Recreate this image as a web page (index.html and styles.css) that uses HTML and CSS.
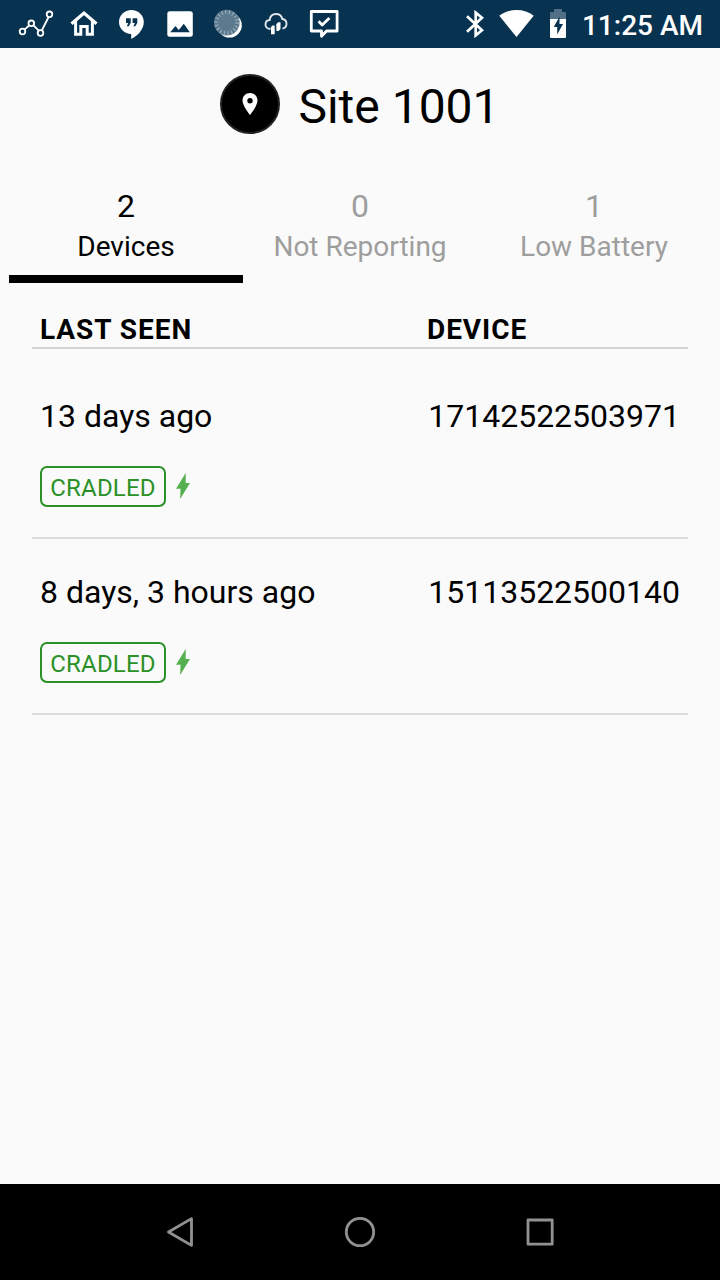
FILE: index.html
```html
<!DOCTYPE html>
<html lang="en">
<head>
    <meta charset="UTF-8">
    <meta name="viewport" content="width=device-width, initial-scale=1.0">
    <title>Site 1001</title>
    <link rel="stylesheet" href="styles.css">
</head>
<body>
    <div class="status-bar">
        <div class="notifications">
            <svg class="status-icon" viewBox="0 0 48 48" fill="none" stroke="#fff" stroke-width="1.8">
                <path d="M12.4 29.6l5-4.4M21 24.8l6 6M30 30l6.6-13"/>
                <circle cx="10.5" cy="31.5" r="2.8"/>
                <circle cx="19.3" cy="23.3" r="2.8"/>
                <circle cx="28.5" cy="33" r="2.8"/>
                <circle cx="37.5" cy="14.3" r="2.8"/>
            </svg>
            <svg class="status-icon" viewBox="0 0 48 48" fill="none" stroke="#fff" stroke-width="3">
                <path d="M11.5 23.8L24 13l12.5 10.8" stroke-width="3.2"/>
                <path d="M15.6 21v13.2h5.2v-7.6h6.4v7.6h5.2V21"/>
            </svg>
            <svg class="status-icon" viewBox="0 0 48 48">
                <path fill="#fff" d="M23.5 10C16.6 10 11 15.3 11 22s5.6 12 12.2 12v5C29 36 35.800 30 35.800 22c0-6.700-5.500-12-12.300-12z"/>
                <path fill="#083350" d="M18 18.300h4.700v4.600l-2 3.300h-1.900l1.500-3.300H18zM24.600 18.300h4.700v4.600l-2 3.300h-1.900l1.500-3.300h-2.300z"/>
            </svg>
            <svg class="status-icon" viewBox="0 0 48 48">
                <rect x="11.300" y="11.300" width="25.500" height="25.500" rx="2.500" fill="#fff"/>
                <path fill="#083350" d="M14.200 32.300l5.300-6.300 3.300 4 5-6.300 6 8.600z"/>
            </svg>
            <svg class="status-icon" viewBox="0 0 48 48">
                <circle cx="25.500" cy="25.300" r="12.300" fill="#fff"/>
                <circle cx="22.800" cy="22.600" r="12.800" fill="#5b7a8e"/>
                <circle cx="22.800" cy="22.600" r="10.500" fill="none" stroke="#a3b4bf" stroke-width="4" stroke-dasharray="1 2.665"/>
            </svg>
            <svg class="status-icon" viewBox="0 0 48 48">
                <path fill="none" stroke="#dfe6ea" stroke-width="1.900" d="M18.500 29c-2.600 0-5-1.600-5-4.500 0-2.700 1.900-4.300 4.200-4.500.4-3.700 3-6 6.300-6 3.200 0 5.700 2 6.300 5 2.700.3 4.200 2.300 4.200 4.800 0 2.400-1.600 4.400-4 4.700"/>
                <path fill="#fff" d="M18.700 27.500l1.700-1.900h2.300v8.700H19v-6.200zM24.300 24.200l1.700-1.900h2.500v6.800l-1.900 1.800h-2.200z"/>
            </svg>
            <svg class="status-icon" viewBox="0 0 48 48" fill="none" stroke="#fff" stroke-linejoin="round">
                <path stroke-width="2.800" d="M11.300 11.500h25.800V31H26.500l-5 5.300V31H11.300z"/>
                <path stroke-width="2.800" d="M18.600 21.300l3.600 3.600 7.200-7"/>
            </svg>
        </div>
        <div class="system">
            <svg class="bluetooth" viewBox="0 0 18 28" fill="none" stroke="#fff" stroke-width="2.700">
                <path d="M1 6.300l15 13.900-6.300 5.200V2.600L16 7.800 1 21.700"/>
            </svg>
            <svg class="wifi" viewBox="0 0 36 28">
                <path fill="#fff" d="M17.500 27L.3 5.700C5 2 11 0 17.500 0S30 2 34.700 5.700z"/>
            </svg>
            <svg class="battery" viewBox="0 0 16 29">
                <path fill="#527085" d="M4 0h8v3h3q1 0 1 1v6H0V4q0-1 1-1h3z"/>
                <path fill="#fff" d="M0 10h16v18q0 1-1 1H1q-1 0-1-1z"/>
                <path fill="#083350" d="M9.500 7.500L3.800 18h3.400v7.500L13 15H9.500z"/>
            </svg>
            <span class="clock">11:25 AM</span>
        </div>
    </div>

    <main class="content">
        <header class="site-header">
            <div class="site-icon">
                <svg viewBox="0 0 16 22">
                    <path fill="#fff" fill-rule="evenodd" d="M8 0C3.700 0 .5 3.300.5 7.500.5 13 8 22 8 22s7.500-9 7.500-14.500C15.500 3.300 12.300 0 8 0zm0 10.400a2.700 2.700 0 1 1 0-5.400 2.700 2.700 0 0 1 0 5.400z"/>
                </svg>
            </div>
            <h1>Site 1001</h1>
        </header>

        <nav class="tabs">
            <div class="tab active">
                <span class="tab-count">2</span>
                <span class="tab-label">Devices</span>
            </div>
            <div class="tab">
                <span class="tab-count">0</span>
                <span class="tab-label">Not Reporting</span>
            </div>
            <div class="tab">
                <span class="tab-count">1</span>
                <span class="tab-label">Low Battery</span>
            </div>
        </nav>

        <section class="device-list">
            <div class="list-header">
                <span>LAST SEEN</span>
                <span class="col-device">DEVICE</span>
            </div>
            <div class="device">
                <div class="device-info">
                    <span>13 days ago</span>
                    <span class="device-id">17142522503971</span>
                </div>
                <div class="device-state">
                    <span class="badge">CRADLED</span>
                    <svg class="bolt" viewBox="0 0 14 26">
                        <path fill="#56b04f" d="M9.700 0L0 15.800h4.500L4.200 26 14 10H9.700z"/>
                    </svg>
                </div>
            </div>
            <div class="device">
                <div class="device-info">
                    <span>8 days, 3 hours ago</span>
                    <span class="device-id">15113522500140</span>
                </div>
                <div class="device-state">
                    <span class="badge">CRADLED</span>
                    <svg class="bolt" viewBox="0 0 14 26">
                        <path fill="#56b04f" d="M9.700 0L0 15.800h4.500L4.200 26 14 10H9.700z"/>
                    </svg>
                </div>
            </div>
        </section>
    </main>

    <div class="nav-bar">
        <svg viewBox="0 0 48 48"><path d="M35.500 10.600v26.800L12.500 24z"/></svg>
        <svg viewBox="0 0 48 48"><circle cx="24" cy="24" r="13.700"/></svg>
        <svg viewBox="0 0 48 48"><rect x="12" y="12" width="24.200" height="24.200"/></svg>
    </div>
</body>
</html>
```
FILE: styles.css
```css
* {
    box-sizing: border-box;
}
body {
    margin: 0;
    height: 1280px;
    display: flex;
    flex-direction: column;
    font-family: Roboto, sans-serif;
    background-color: #fafafa;
    color: #000;
}
svg {
    display: block;
    flex: none;
}
.status-bar {
    height: 48px;
    padding: 0 17px 0 12px;
    display: flex;
    justify-content: space-between;
    background-color: #083350;
}
.notifications {
    display: flex;
}
.status-icon {
    width: 48px;
    height: 48px;
}
.system {
    display: flex;
    align-items: flex-start;
}
.bluetooth {
    width: 18px;
    height: 28px;
    margin: 10px 15px 0 0;
}
.wifi {
    width: 36px;
    height: 28px;
    margin: 10px 15px 0 0;
}
.battery {
    width: 16px;
    height: 29px;
    margin: 9px 16px 0 0;
}
.clock {
    color: #fff;
    font-size: 28px;
    font-weight: 500;
    line-height: 52px;
}
.content {
    flex: 1;
}
.site-header {
    height: 138px;
    padding-top: 26px;
    display: flex;
    justify-content: center;
    gap: 18px;
}
.site-icon {
    width: 60px;
    height: 60px;
    border: 2px solid #222;
    border-radius: 50%;
    background-color: #000;
    display: flex;
    justify-content: center;
    align-items: center;
}
.site-icon svg {
    width: 16px;
    height: 22px;
}
h1 {
    margin: 3px 0 0;
    font-size: 48px;
    font-weight: 400;
    line-height: 60px;
}
.tabs {
    display: flex;
    padding: 0 9px;
}
.tab {
    flex: 1;
    display: flex;
    flex-direction: column;
    align-items: center;
    padding-bottom: 7px;
    border-bottom: 8px solid transparent;
    line-height: 40px;
    color: #9e9e9e;
}
.tab.active {
    color: #000;
    border-bottom-color: #000;
}
.tab-count {
    font-size: 32px;
}
.tab-label {
    font-size: 28px;
    line-height: 42px;
}
.device-list {
    padding: 30px 32px 0;
}
.list-header {
    display: flex;
    justify-content: space-between;
    padding: 0 8px;
    margin-bottom: 14px;
    border-bottom: 2px solid #d8d4d6;
    font-size: 28px;
    font-weight: 700;
    letter-spacing: 0.95px;
    line-height: 34px;
}
.col-device {
    width: 253px;
}
.device {
    height: 176px;
    padding: 33px 8px 0;
    border-bottom: 2px solid #dcdcdc;
}
.device-info {
    display: flex;
    justify-content: space-between;
    font-size: 32px;
    line-height: 40px;
}
.device-state {
    display: flex;
    align-items: center;
    gap: 10px;
    margin-top: 30px;
}
.badge {
    width: 126px;
    height: 41px;
    border: 2px solid #2a9127;
    border-radius: 7px;
    color: #2a9127;
    font-size: 24px;
    letter-spacing: 0.2px;
    line-height: 40px;
    text-align: center;
}
.bolt {
    width: 14px;
    height: 26px;
    margin-bottom: 1px;
}
.nav-bar {
    height: 96px;
    display: flex;
    justify-content: center;
    align-items: center;
    gap: 132px;
    background-color: #000;
}
.nav-bar svg {
    width: 48px;
    height: 48px;
    fill: none;
    stroke: #919191;
    stroke-width: 2.8;
    stroke-linejoin: round;
}
```
